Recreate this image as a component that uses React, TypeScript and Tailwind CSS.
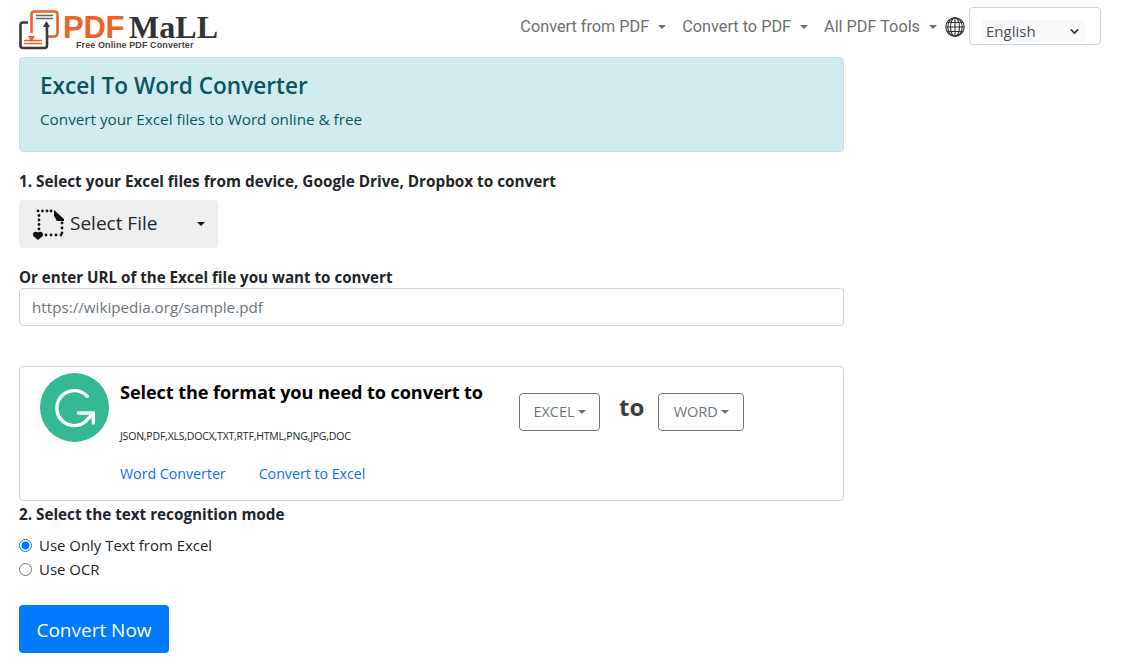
import { ChevronDown } from "lucide-react";

const sans = "font-['Open_Sans','Noto_Sans',sans-serif]";

const topDots = [5, 9.5, 14, 18];
const leftDots = [7.5, 12, 16.5, 21];
const rightDots = [15, 20, 25];
const bottomDots = [13, 18, 23, 28];

function Caret({ className }: { className: string }) {
  return <span className={`inline-block border-x-[4px] border-t-[4px] border-x-transparent ${className}`} />;
}

function Logo() {
  return (
    <div className="flex items-start">
      <svg width="42" height="41" viewBox="0 0 42 41" className="shrink-0">
        <path d="M30 27.5H36Q39.5 27.5 39.5 24V5.5Q39.5 2.5 36.5 2.5H16.5Q13.5 2.5 13.5 5.5V24" fill="none" stroke="#ea6327" strokeWidth="2.6" />
        <path d="M10 27L13.5 33L17 27Z" fill="#ea6327" />
        <path d="M10 13.5H5Q2.5 13.5 2.5 16V36.5Q2.5 39 5 39H26.5Q29 39 29 36.5V17" fill="none" stroke="#3a3a3a" strokeWidth="2.6" />
        <path d="M25 18L28.5 12L32 18Z" fill="#3a3a3a" />
        <path d="M18 6.5H35M18 9.5H35" stroke="#666" strokeWidth="1.5" />
        <path d="M6 31.5H24M6 34.5H24" stroke="#ea6327" strokeWidth="1.6" />
      </svg>
      <div className="ml-[3px] pt-[5px]">
        <div className="flex h-[26px] items-baseline whitespace-nowrap leading-[26px]">
          <span className="font-['Liberation_Sans',sans-serif] text-[31px] font-bold tracking-[-0.3px] text-[#ea6327]">PDF</span>
          <span className="ml-[5px] font-['Liberation_Serif',serif] text-[32px] font-bold text-[#333]">MaLL</span>
        </div>
        <div className="ml-[13px] whitespace-nowrap font-['Liberation_Sans',sans-serif] text-[9px] leading-[10px] font-bold tracking-[0.1px] text-[#444]">
          Free Online PDF Converter
        </div>
      </div>
    </div>
  );
}

function NavItem({ label }: { label: string }) {
  return (
    <a className="flex items-center gap-[9px] text-[#6f6f6f]">
      {label}
      <Caret className="border-t-[#6f6f6f]" />
    </a>
  );
}

function Header() {
  return (
    <header className="flex h-[57px] pl-[18px]">
      <div className="pt-[9px]">
        <Logo />
      </div>
      <nav className="ml-auto flex h-[54px] items-center gap-[16px] pr-[32px] font-['Roboto',sans-serif] text-[16.25px]">
        <NavItem label="Convert from PDF" />
        <NavItem label="Convert to PDF" />
        <div className="flex items-center">
          <NavItem label="All PDF Tools" />
          <svg width="20" height="20" viewBox="0 0 20 20" className="ml-[8px]" fill="none" stroke="#333" strokeWidth="1.1">
            <circle cx="10" cy="10" r="9.2" />
            <ellipse cx="10" cy="10" rx="4.5" ry="9.2" />
            <ellipse cx="10" cy="10" rx="7.2" ry="9.2" />
            <path d="M10 1V19M1 10H19M2.5 5.5H17.5M2.5 14.5H17.5" />
          </svg>
          <div className={`-mt-[2px] ml-[4px] flex h-[38px] w-[132px] items-end rounded border border-[#ced4da] pb-[2px] pl-[12px] ${sans}`}>
            <div className="flex h-[22px] w-[103px] items-center justify-between bg-[#f8f9fa] pl-[4px] pr-[4px] text-[15px] text-[#495057]">
              English
              <ChevronDown size={13} strokeWidth={3} className="text-[#333]" />
            </div>
          </div>
        </div>
      </nav>
    </header>
  );
}

function SelectFileIcon() {
  return (
    <svg width="32" height="32" viewBox="0 0 32 32" className="shrink-0" fill="#111">
      {topDots.map((x) => (
        <circle key={`t${x}`} cx={x} cy="3" r="1.4" />
      ))}
      {leftDots.map((y) => (
        <circle key={`l${y}`} cx="6" cy={y} r="1.4" />
      ))}
      {rightDots.map((y) => (
        <circle key={`r${y}`} cx="29" cy={y} r="1.4" />
      ))}
      {bottomDots.map((x) => (
        <circle key={`b${x}`} cx={x} cy="27" r="1.4" />
      ))}
      <path d="M21 2L31 11V13H24L21 8Z" />
      <circle cx="2.8" cy="26.5" r="2.8" />
      <circle cx="7.2" cy="26.5" r="2.8" />
      <path d="M0.4 28L5 32L9.600 28Z" />
    </svg>
  );
}

function FormatButton({ label, className }: { label: string; className: string }) {
  return (
    <button className={`flex h-[38px] items-center justify-center gap-[3px] rounded border border-[#6c757d] text-[14.5px] text-[#6c757d] ${className}`}>
      {label}
      <Caret className="border-t-[#6c757d]" />
    </button>
  );
}

function FormatBox() {
  return (
    <section className="mt-[40px] flex h-[135px] rounded border border-[#d4d4d4] pl-[20px] pt-[6px]">
      <svg width="69" height="69" viewBox="0 0 69 69" className="shrink-0">
        <circle cx="34.5" cy="34.5" r="34.5" fill="#35b994" />
        <path d="M47.3 23.3A17.5 17.5 0 1 0 45 49L53.3 40H38.3M53.3 40V50" fill="none" stroke="#fff" strokeWidth="3.4" strokeLinecap="round" strokeLinejoin="round" />
      </svg>
      <div className="ml-[11px] w-[399px]">
        <h2 className="mt-[6px] text-[18.15px] leading-[27px] font-bold tracking-[-0.1px] text-black">Select the format you need to convert to</h2>
        <p className="mt-[23px] text-[10.5px] leading-[15px] tracking-[-0.2px] text-[#212529]">JSON,PDF,XLS,DOCX,TXT,RTF,HTML,PNG,JPG,DOC</p>
        <div className="mt-[19px] flex gap-[33px] text-[14.2px] leading-[21px] text-[#0d6efd]">
          <a>Word Converter</a>
          <a>Convert to Excel</a>
        </div>
      </div>
      <div className="mt-[20px] flex h-[38px] items-center">
        <FormatButton label="EXCEL" className="w-[81px]" />
        <span className="ml-[19px] mr-[14px] -mt-[10px] text-[24px] font-bold text-[#3d3d3d]">to</span>
        <FormatButton label="WORD" className="w-[86px]" />
      </div>
    </section>
  );
}

export default function App() {
  return (
    <div className={`h-[669px] w-[1133px] overflow-hidden bg-white text-[#212529] ${sans}`}>
      <Header />
      <main className="ml-[19px] w-[825px]">
        <section className="h-[95px] rounded border border-[#bee5eb] bg-[#d1ecf1] px-[20px] pt-[13px] text-[#0c5460]">
          <h1 className="text-[22.6px] leading-[29px] font-semibold">Excel To Word Converter</h1>
          <p className="mt-[7px] text-[15.25px] leading-[24px]">Convert your Excel files to Word online &amp; free</p>
        </section>

        <p className="mt-[17px] text-[15.3px] leading-[24px] font-bold">1. Select your Excel files from device, Google Drive, Dropbox to convert</p>
        <div className="mt-[7px] flex h-[48px] w-[199px] items-center rounded bg-[#efefef] pl-[14px] pr-[13px]">
          <SelectFileIcon />
          <span className="ml-[5px] -mt-[2px] text-[19px] text-[#212529]">Select File</span>
          <Caret className="ml-auto border-t-[#111]" />
        </div>

        <p className="mt-[17px] text-[15.15px] leading-[24px] font-bold">Or enter URL of the Excel file you want to convert</p>
        <input
          readOnly
          placeholder="https://wikipedia.org/sample.pdf"
          className="-mt-[1px] block h-[38px] w-full rounded border border-[#ced4da] px-[12px] text-[15.2px] placeholder:text-[#6c757d]"
        />

        <FormatBox />

        <p className="mt-[1px] text-[15.25px] leading-[24px] font-bold">2. Select the text recognition mode</p>
        <div className="mt-[7px] text-[14.95px] leading-[24px]">
          <label className="flex items-center gap-[7px]">
            <input type="radio" name="mode" defaultChecked className="h-[13px] w-[13px] accent-[#0075ff]" />
            Use Only Text from Excel
          </label>
          <label className="flex items-center gap-[7px]">
            <input type="radio" name="mode" className="h-[13px] w-[13px]" />
            Use OCR
          </label>
        </div>
        <button className="mt-[24px] h-[48px] w-[150px] rounded bg-[#007bff] pt-[2px] text-[19px] text-white">Convert Now</button>
      </main>
    </div>
  );
}
